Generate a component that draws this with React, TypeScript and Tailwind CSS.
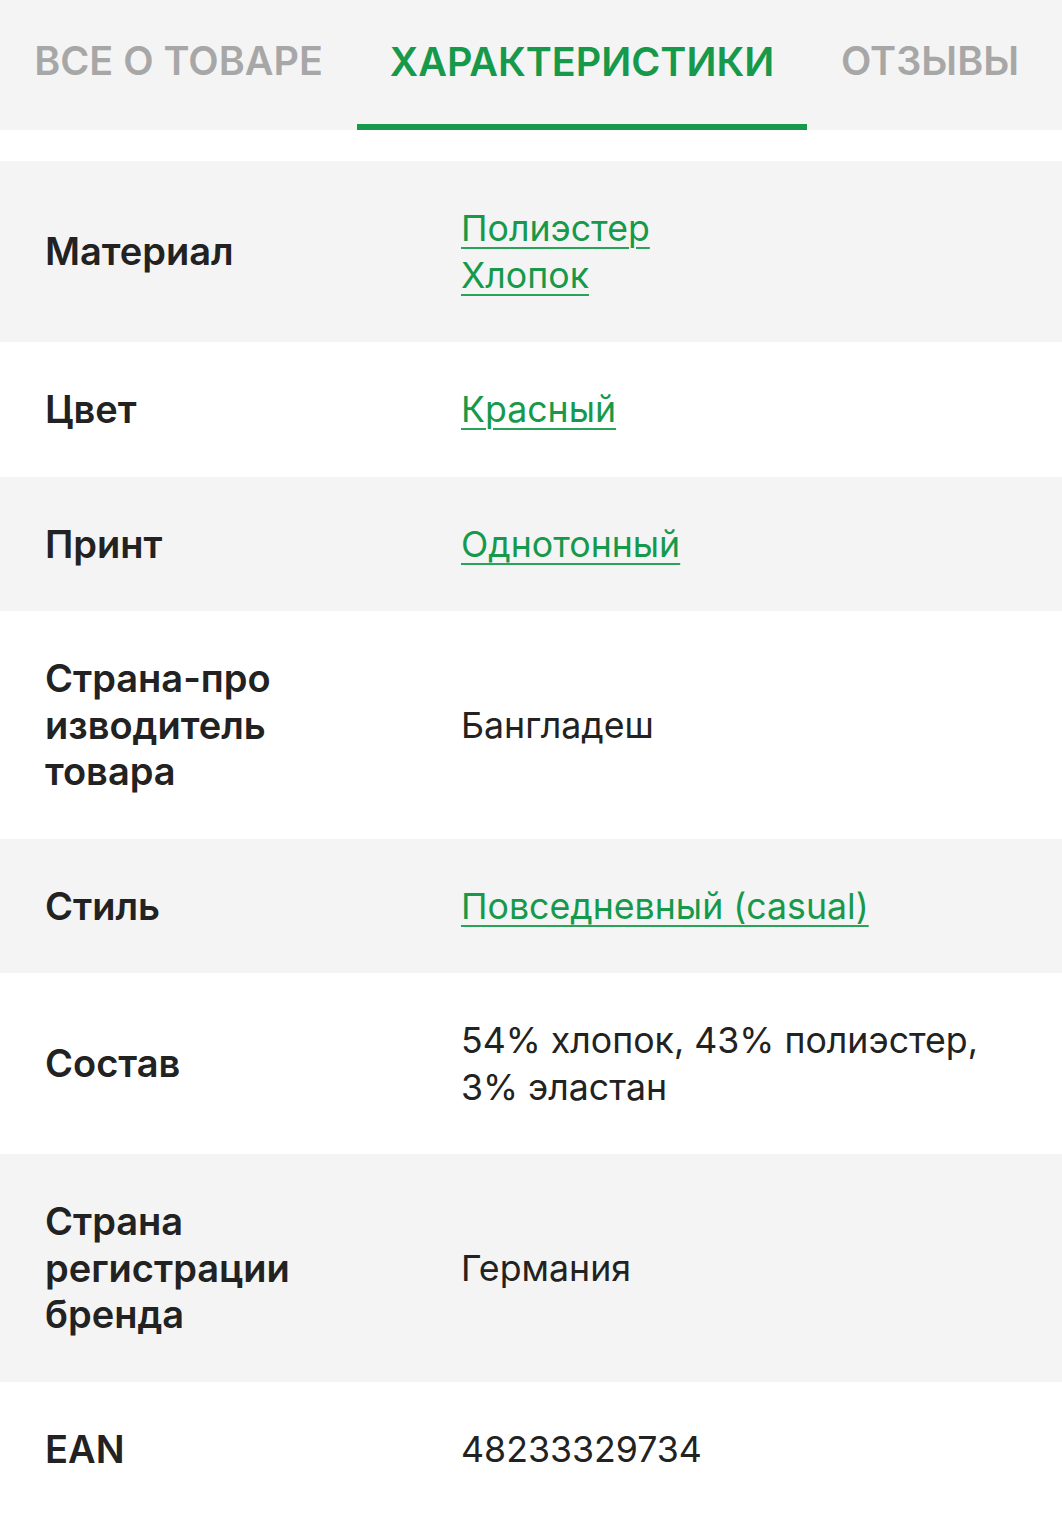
import React from "react";

type Row = { label: string[]; value: string[]; link?: boolean };

const rows: Row[] = [
  { label: ["Материал"], value: ["Полиэстер", "Хлопок"], link: true },
  { label: ["Цвет"], value: ["Красный"], link: true },
  { label: ["Принт"], value: ["Однотонный"], link: true },
  { label: ["Страна-про", "изводитель", "товара"], value: ["Бангладеш"] },
  { label: ["Стиль"], value: ["Повседневный (casual)"], link: true },
  { label: ["Состав"], value: ["54% хлопок, 43% полиэстер,", "3% эластан"] },
  { label: ["Страна", "регистрации", "бренда"], value: ["Германия"] },
  { label: ["EAN"], value: ["48233329734"] },
];

export default function App() {
  return (
    <div
      className="w-[1062px] min-h-[1526px] bg-white overflow-hidden"
      style={{ fontFamily: "Inter, 'Noto Sans', sans-serif" }}
    >
      <div className="flex h-[130px] bg-[#f4f4f4]">
        <div className="w-[357px] flex items-center justify-center pb-[6px] text-[39.5px] font-semibold text-[#a7a7a7]">
          ВСЕ О ТОВАРЕ
        </div>
        <div className="w-[450px] flex flex-col">
          <div className="flex-1 flex items-center justify-center pt-[1px] text-[39.5px] font-semibold text-[#16994a]">
            ХАРАКТЕРИСТИКИ
          </div>
          <div className="h-[6px] bg-[#16994a]" />
        </div>
        <div className="flex-1 flex items-center pl-[34px] pb-[6px] text-[39.5px] font-semibold text-[#a7a7a7]">
          ОТЗЫВЫ
        </div>
      </div>
      <div className="h-[31px]" />
      <div className="flex flex-col">
        {rows.map((r, i) => (
          <div
            key={i}
            className={`flex items-center py-[44px] leading-[46.5px] ${
              i % 2 === 0 ? "bg-[#f4f4f4]" : "bg-white"
            }`}
          >
            <div className="w-[461px] shrink-0 pl-[45px] text-[38px] font-semibold text-[#222222]">
              {r.label.map((l, j) => (
                <div key={j}>{l}</div>
              ))}
            </div>
            <div className="flex-1 text-[35.7px] text-[#222222]">
              {r.value.map((v, j) => (
                <div key={j}>
                  {r.link ? (
                    <span className="text-[#16994a] underline decoration-[#2aa35a] decoration-2 underline-offset-[6px]">
                      {v}
                    </span>
                  ) : (
                    v
                  )}
                </div>
              ))}
            </div>
          </div>
        ))}
      </div>
    </div>
  );
}
